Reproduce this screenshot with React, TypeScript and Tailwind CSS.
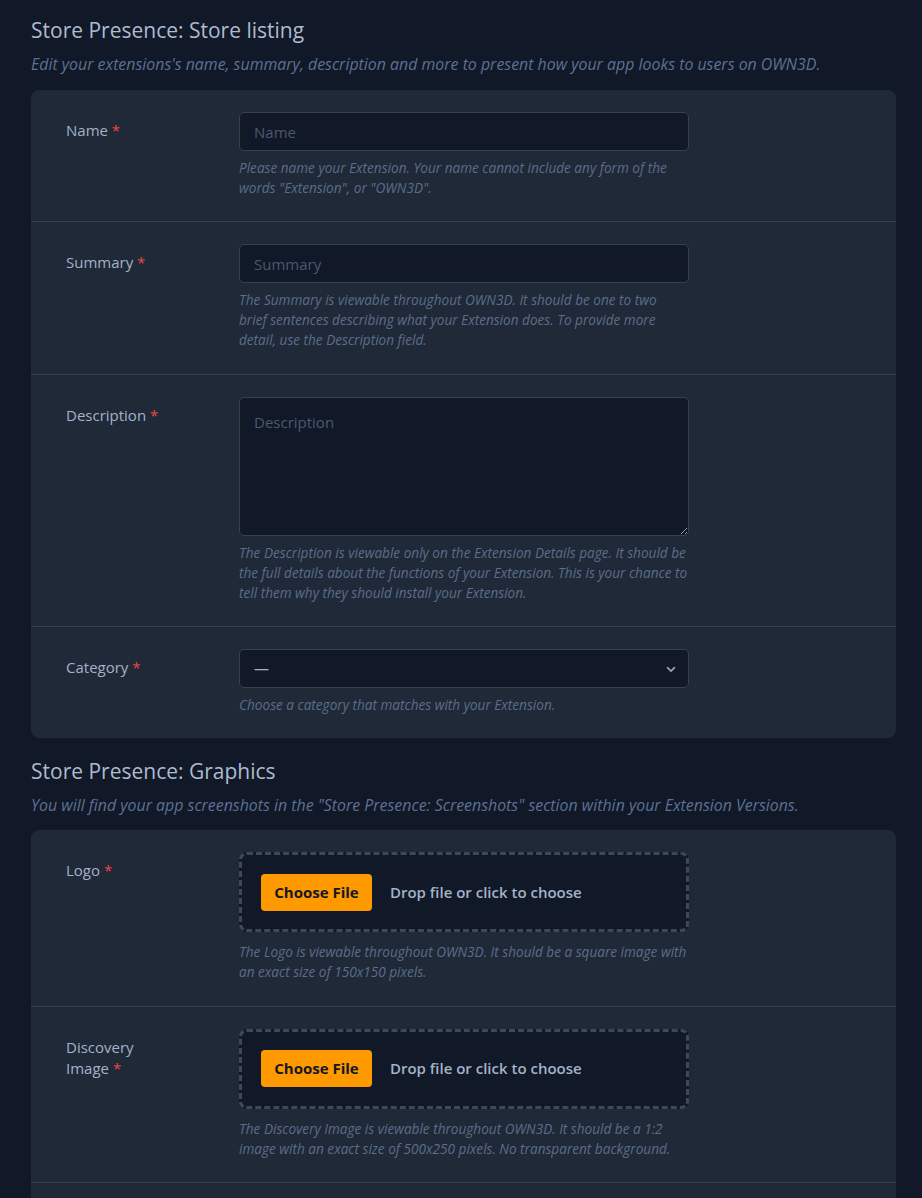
import React from 'react';

// ============================================================
// Extension store presence form — listing + graphics
// ============================================================

const FONT = { fontFamily: '"Open Sans", "Noto Sans", sans-serif' };

function Label({ children }: { children: React.ReactNode }) {
  return (
    <label className="block w-[108px] pt-[8px] text-[15px] leading-[21px] text-[#a3b2c9]">
      {children}
      <span className="text-[#ef4444]"> *</span>
    </label>
  );
}

function Help({ children, gap = 'mt-[7px]' }: { children: React.ReactNode; gap?: string }) {
  return (
    <p className={gap + ' w-[452px] text-[13.6px] italic leading-[20px] text-[#5c6d8a]'}>
      {children}
    </p>
  );
}

function Row({
  label,
  help,
  children,
  last,
  file,
}: {
  label: React.ReactNode;
  help: React.ReactNode;
  children: React.ReactNode;
  last?: boolean;
  file?: boolean;
}) {
  return (
    <div
      className={
        'flex pl-[35px] pt-[22px] ' +
        (last ? 'pb-[23px]' : 'pb-[23.4px] border-b border-[#374151]')
      }
    >
      <div className="w-[173px] shrink-0">
        <Label>{label}</Label>
      </div>
      <div>
        {children}
        <Help gap={file ? 'mt-[10px]' : 'mt-[7px]'}>{help}</Help>
      </div>
    </div>
  );
}

function FileDrop() {
  return (
    <div className="flex h-[80px] w-[450px] items-center gap-[18px] rounded-[8px] border-[3px] border-dashed border-[#3d495b] bg-[#111827] pl-[19px]">
      <button className="h-[37px] w-[111px] rounded-[4px] bg-[#ff9900] text-[15px] font-bold text-[#111827]">
        Choose File
      </button>
      <span className="text-[15px] font-semibold text-[#a3b2c9]">
        Drop file or click to choose
      </span>
    </div>
  );
}

export default function App() {
  const inputCls =
    'h-[39px] w-[450px] rounded-[5px] border border-[#374151] bg-[#111827] px-[14px] text-[15px] text-[#cbd5e1] placeholder:text-[#4b5870] outline-none';

  return (
    <div style={FONT} className="min-h-[1198px] bg-[#111827] pl-[31px] pr-[26px] pt-[16px]">
      <h1 className="text-[21px] leading-[28px] text-[#aebbd0]">
        Store Presence: Store listing
      </h1>
      <p className="mt-[10px] text-[15.9px] italic leading-[20px] text-[#5d7194]">
        Edit your extensions's name, summary, description and more to present how your app looks to users on OWN3D.
      </p>

      <div className="mt-[16px] rounded-[8px] bg-[#1f2937]">
        <Row
          label="Name"
          help={<>Please name your Extension. Your name cannot include any form of the words "Extension", or "OWN3D".</>}
        >
          <input className={inputCls} placeholder="Name" />
        </Row>
        <Row
          label="Summary"
          help={
            <>
              The Summary is viewable throughout OWN3D. It should be one to two
              <br />
              brief sentences describing what your Extension does. To provide more
              <br />
              detail, use the Description field.
            </>
          }
        >
          <input className={inputCls} placeholder="Summary" />
        </Row>
        <Row
          label="Description"
          help="The Description is viewable only on the Extension Details page. It should be the full details about the functions of your Extension. This is your chance to tell them why they should install your Extension."
        >
          <textarea
            className="block h-[139px] w-[450px] rounded-[5px] border border-[#374151] bg-[#111827] px-[14px] py-[13px] text-[15px] text-[#cbd5e1] placeholder:text-[#4b5870] outline-none"
            placeholder="Description"
          />
        </Row>
        <Row label="Category" help="Choose a category that matches with your Extension." last>
          <div className="flex h-[39px] w-[450px] items-center justify-between rounded-[5px] border border-[#374151] bg-[#111827] pl-[14px] pr-[10px] text-[15px] text-[#a3b2c9]">
            <span>—</span>
            <svg width="14" height="14" viewBox="0 0 20 20" fill="none">
              <path d="M5 8l5 5 5-5" stroke="#9ca3af" strokeWidth="2.4" strokeLinecap="round" strokeLinejoin="round" />
            </svg>
          </div>
        </Row>
      </div>

      <h2 className="mt-[19px] text-[21px] leading-[28px] text-[#aebbd0]">
        Store Presence: Graphics
      </h2>
      <p className="mt-[10px] text-[15.9px] italic leading-[20px] text-[#5d7194]">
        You will find your app screenshots in the "Store Presence: Screenshots" section within your Extension Versions.
      </p>

      <div className="mt-[15px] rounded-t-[8px] bg-[#1f2937]">
        <Row
          label="Logo"
          file
          help="The Logo is viewable throughout OWN3D. It should be a square image with an exact size of 150x150 pixels."
        >
          <FileDrop />
        </Row>
        <Row
          label="Discovery Image"
          file
          help="The Discovery Image is viewable throughout OWN3D. It should be a 1:2 image with an exact size of 500x250 pixels. No transparent background."
        >
          <FileDrop />
        </Row>
        <div className="h-[40px]" />
      </div>
    </div>
  );
}
